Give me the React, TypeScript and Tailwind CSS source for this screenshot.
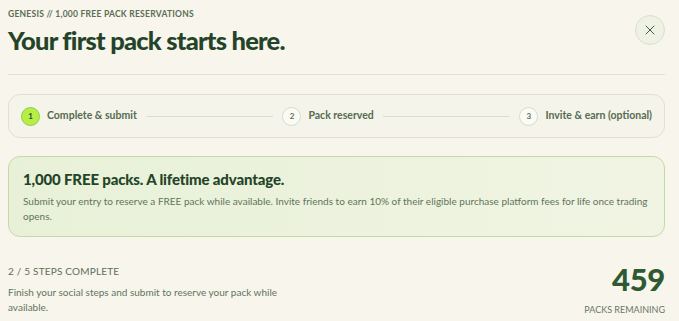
import React from 'react';
import { X } from 'lucide-react';

const steps = [
  { n: 1, label: 'Complete & submit', active: true },
  { n: 2, label: 'Pack reserved', active: false },
  { n: 3, label: 'Invite & earn (optional)', active: false },
];

const StepDot: React.FC<{ n: number; active: boolean }> = ({ n, active }) => (
  <span
    className={
      'flex h-[19px] w-[19px] shrink-0 items-center justify-center rounded-full border text-[8px] font-bold ' +
      (active
        ? 'border-[#8fcf3a] bg-[#b4ee47] text-[#2d4a2a]'
        : 'border-[#d8dccb] bg-[#fbfbf6] text-[#5e6d58]')
    }
  >
    {n}
  </span>
);

export default function App() {
  return (
    <div
      className="min-h-[321px] w-full bg-[#f7f5ec] pl-[8px] pr-[14px] text-[#2b4a2f]"
      style={{ fontFamily: 'Lato, "Open Sans", sans-serif' }}
    >
      <div className="flex items-start justify-between pt-[8px]">
        <div>
          <p className="text-[8.5px] font-bold tracking-[0.03em] text-[#5a6d55]">
            GENESIS // 1,000 FREE PACK RESERVATIONS
          </p>
          <h1 className="mt-[7px] text-[25.5px] font-black leading-none tracking-[-0.03em] text-[#244429]">
            Your first pack starts here.
          </h1>
        </div>
        <button className="mt-[7px] flex h-[30px] w-[30px] items-center justify-center rounded-full border border-[#d7e2c9] bg-[#eef1e3] text-[#3f6343]">
          <X size={16} strokeWidth={1.5} />
        </button>
      </div>

      <div className="mt-[21px] h-px bg-[#e2e3d5]" />

      <div className="mt-[19px] flex h-[44px] items-center rounded-[12px] border border-[#e0e1d3] bg-[#f4f4ea] px-[12px]">
        {steps.map((s, i) => (
          <React.Fragment key={s.n}>
            <div className="flex items-center gap-[7px]">
              <StepDot n={s.n} active={s.active} />
              <span className="whitespace-nowrap text-[10.5px] font-bold text-[#566b51]">{s.label}</span>
            </div>
            {i < steps.length - 1 && <div className="mx-[9px] h-px flex-1 bg-[#dcdccd]" />}
          </React.Fragment>
        ))}
      </div>

      <div className="mt-[18px] rounded-[12px] border border-[#c3d9a6] bg-gradient-to-r from-[#e8f1d8] to-[#f1f4e3] px-[14px] pb-[12px] pt-[13px]">
        <h2 className="text-[15px] font-black leading-tight tracking-[-0.01em] text-[#244429]">
          1,000 FREE packs. A lifetime advantage.
        </h2>
        <p className="mt-[5px] text-[10px] leading-[15px] text-[#61755b]">
          Submit your entry to reserve a FREE pack while available. Invite friends to earn 10% of their eligible
          purchase platform fees for life once trading opens.
        </p>
      </div>

      <div className="mt-[27px] flex items-start justify-between">
        <div className="w-[300px]">
          <p className="text-[10px] tracking-[0.02em] text-[#5f6f5a]">2 / 5 STEPS COMPLETE</p>
          <p className="mt-[6px] text-[10px] leading-[15px] text-[#61755b]">
            Finish your social steps and submit to reserve your pack while available.
          </p>
        </div>
        <div className="flex flex-col items-end">
          <span className="text-[31px] font-black leading-none tracking-[-0.01em] text-[#2d5a32]">459</span>
          <span className="mt-[8px] text-[9px] text-[#6a7764]">PACKS REMAINING</span>
        </div>
      </div>
    </div>
  );
}
